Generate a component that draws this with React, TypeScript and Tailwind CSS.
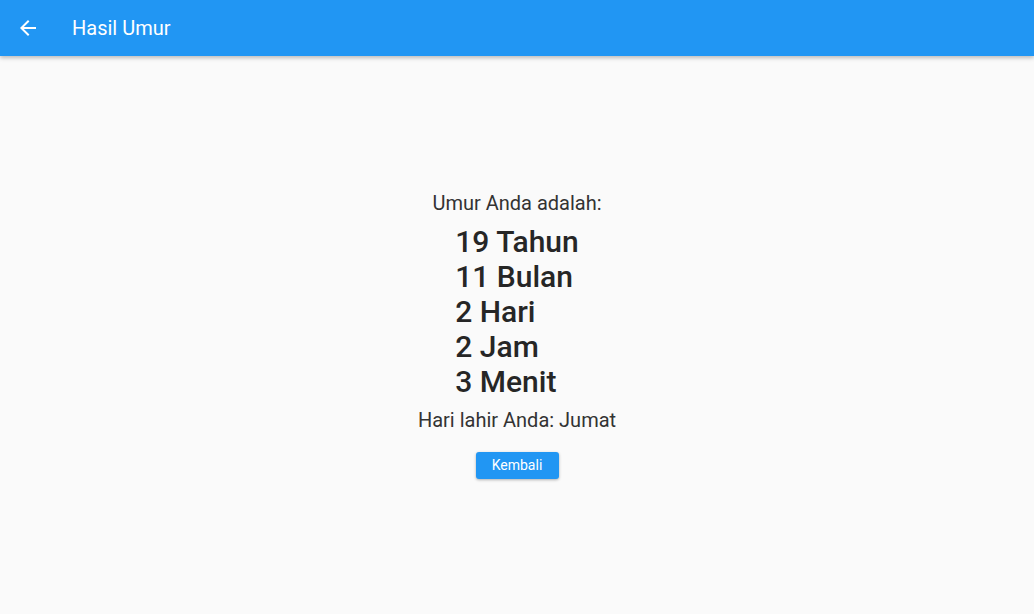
import React from "react";

export default function App() {
  return (
    <div
      className="w-[1034px] h-[614px] bg-[#fafafa] flex flex-col overflow-hidden"
      style={{ fontFamily: "Roboto, 'Noto Sans', sans-serif" }}
    >
      <header className="h-[56px] bg-[#2196f3] flex items-center shrink-0 shadow-[0_2px_4px_rgba(0,0,0,0.25)] relative z-10">
        <div className="w-[56px] h-[56px] flex items-center justify-center">
          <svg width="24" height="24" viewBox="0 0 24 24" fill="#fff">
            <path d="M20 11H7.83l5.59-5.59L12 4l-8 8 8 8 1.41-1.41L7.83 13H20v-2z" />
          </svg>
        </div>
        <h1 className="ml-[16px] text-white text-[20px] font-normal leading-none">Hasil Umur</h1>
      </header>
      <main className="flex-1 flex flex-col items-center justify-center text-[#212121]">
        <p className="text-[20px] leading-[23px] text-[#333]">Umur Anda adalah:</p>
        <div className="mt-[9px] flex flex-col items-start text-[30px] leading-[35px] font-medium text-[#262626]">
          <span>19 Tahun</span>
          <span>11 Bulan</span>
          <span>2 Hari</span>
          <span>2 Jam</span>
          <span>3 Menit</span>
        </div>
        <p className="mt-[10px] text-[20px] leading-[23px] text-[#333]">Hari lahir Anda: Jumat</p>
        <button className="mt-[20px] h-[27px] w-[83px] rounded-[3px] bg-[#2196f3] text-white text-[14px] font-normal shadow-[0_1px_3px_rgba(0,0,0,0.3)] flex items-center justify-center">
          Kembali
        </button>
      </main>
    </div>
  );
}
